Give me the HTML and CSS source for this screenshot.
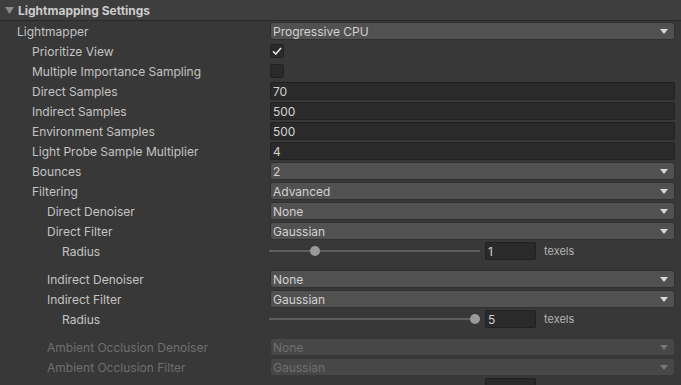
FILE: index.html
```html
<!DOCTYPE html>
<html>
<head>
<meta charset="utf-8">
<link rel="stylesheet" href="styles.css">
</head>
<body>
<div class="panel">
  <div class="header">
    <svg class="fold" width="9" height="8" viewBox="0 0 9 8"><path d="M0 1 L9 1 L4.5 8 Z" fill="#8a8a8a"/></svg>
    <span class="title">Lightmapping Settings</span>
  </div>
  <div class="rows">
    <div class="row"><span class="label l0">Lightmapper</span><div class="dropdown"><span>Progressive CPU</span><i class="arrow"></i></div></div>
    <div class="row"><span class="label l1">Prioritize View</span><div class="checkbox checked"><svg width="10" height="8" viewBox="0 0 10 8"><path d="M1 4.2 L3.8 7 L9 1" fill="none" stroke="#e8e8e8" stroke-width="1.6"/></svg></div></div>
    <div class="row"><span class="label l1">Multiple Importance Sampling</span><div class="checkbox"></div></div>
    <div class="row"><span class="label l1">Direct Samples</span><div class="field">70</div></div>
    <div class="row"><span class="label l1">Indirect Samples</span><div class="field">500</div></div>
    <div class="row"><span class="label l1">Environment Samples</span><div class="field">500</div></div>
    <div class="row"><span class="label l1">Light Probe Sample Multiplier</span><div class="field">4</div></div>
    <div class="row"><span class="label l1">Bounces</span><div class="dropdown"><span>2</span><i class="arrow"></i></div></div>
    <div class="row"><span class="label l1">Filtering</span><div class="dropdown"><span>Advanced</span><i class="arrow"></i></div></div>
    <div class="row"><span class="label l2">Direct Denoiser</span><div class="dropdown"><span>None</span><i class="arrow"></i></div></div>
    <div class="row"><span class="label l2">Direct Filter</span><div class="dropdown"><span>Gaussian</span><i class="arrow"></i></div></div>
    <div class="row"><span class="label l3">Radius</span>
      <div class="slider-row"><div class="track"><div class="thumb" style="left:41px"></div></div><div class="field num">1</div><span class="unit">texels</span></div>
    </div>
    <div class="spacer"></div>
    <div class="row"><span class="label l2">Indirect Denoiser</span><div class="dropdown"><span>None</span><i class="arrow"></i></div></div>
    <div class="row"><span class="label l2">Indirect Filter</span><div class="dropdown"><span>Gaussian</span><i class="arrow"></i></div></div>
    <div class="row"><span class="label l3">Radius</span>
      <div class="slider-row"><div class="track"><div class="thumb" style="left:201px"></div></div><div class="field num">5</div><span class="unit">texels</span></div>
    </div>
    <div class="spacer"></div>
    <div class="row disabled"><span class="label l2">Ambient Occlusion Denoiser</span><div class="dropdown"><span>None</span><i class="arrow"></i></div></div>
    <div class="row disabled"><span class="label l2">Ambient Occlusion Filter</span><div class="dropdown"><span>Gaussian</span><i class="arrow"></i></div></div>
    <div class="row disabled"><span class="label l3"></span>
      <div class="slider-row"><div class="track"></div><div class="field num"></div></div>
    </div>
  </div>
</div>
</body>
</html>
```
FILE: styles.css
```css
html, body {
  margin: 0;
  padding: 0;
  background: #383838;
  overflow: hidden;
}
body {
  width: 681px;
  height: 385px;
  font-family: Inter, "Noto Sans", sans-serif;
  font-size: 12px;
  color: #c4c4c4;
}
.header {
  height: 20px;
  background: #3e3e3e;
  border-bottom: 1px solid #2a2a2a;
  display: flex;
  align-items: center;
  padding-left: 5px;
  gap: 4px;
}
.title {
  font-weight: 700;
  color: #cccccc;
  font-size: 12px;
}
.rows {
  display: flex;
  flex-direction: column;
}
.row {
  height: 20px;
  display: grid;
  grid-template-columns: 270px 405px;
  align-items: center;
}
.spacer { height: 8px; }
.label { white-space: nowrap; padding-top: 1px; }
.l0 { padding-left: 17px; }
.l1 { padding-left: 32px; }
.l2 { padding-left: 47px; }
.l3 { padding-left: 62px; }
.dropdown {
  height: 16px;
  background: #515151;
  border: 1px solid #303030;
  border-radius: 3px;
  display: flex;
  align-items: center;
  justify-content: space-between;
  padding: 0 6px 0 2px;
  color: #d2d2d2;
}
.arrow {
  width: 0;
  height: 0;
  border-left: 4px solid transparent;
  border-right: 4px solid transparent;
  border-top: 5px solid #d8d8d8;
  margin-top: 1px;
}
.checkbox {
  width: 12px;
  height: 12px;
  background: #2a2a2a;
  border: 1px solid #232323;
  border-radius: 2px;
  display: flex;
  align-items: center;
  justify-content: center;
}
.field {
  height: 16px;
  background: #2a2a2a;
  border: 1px solid #212121;
  border-radius: 2px;
  display: flex;
  align-items: center;
  padding-left: 2px;
  color: #d2d2d2;
}
.slider-row {
  display: flex;
  align-items: center;
  height: 20px;
}
.track {
  position: relative;
  width: 211px;
  height: 2px;
  background: #5e5e5e;
  margin-left: -1px;
}
.thumb {
  position: absolute;
  top: -4px;
  width: 10px;
  height: 10px;
  border-radius: 50%;
  background: #999999;
}
.field.num {
  width: 47px;
  margin-left: 5px;
}
.unit {
  margin-left: 8px;
  font-size: 11px;
  color: #b4b4b4;
}
.disabled .label,
.disabled .dropdown,
.disabled .field,
.disabled .unit { color: #6f6f6f; }
.disabled .dropdown { background: #474747; border-color: #383838; }
.disabled .arrow { border-top-color: #777; }
.disabled .track { background: #4a4a4a; }
```
